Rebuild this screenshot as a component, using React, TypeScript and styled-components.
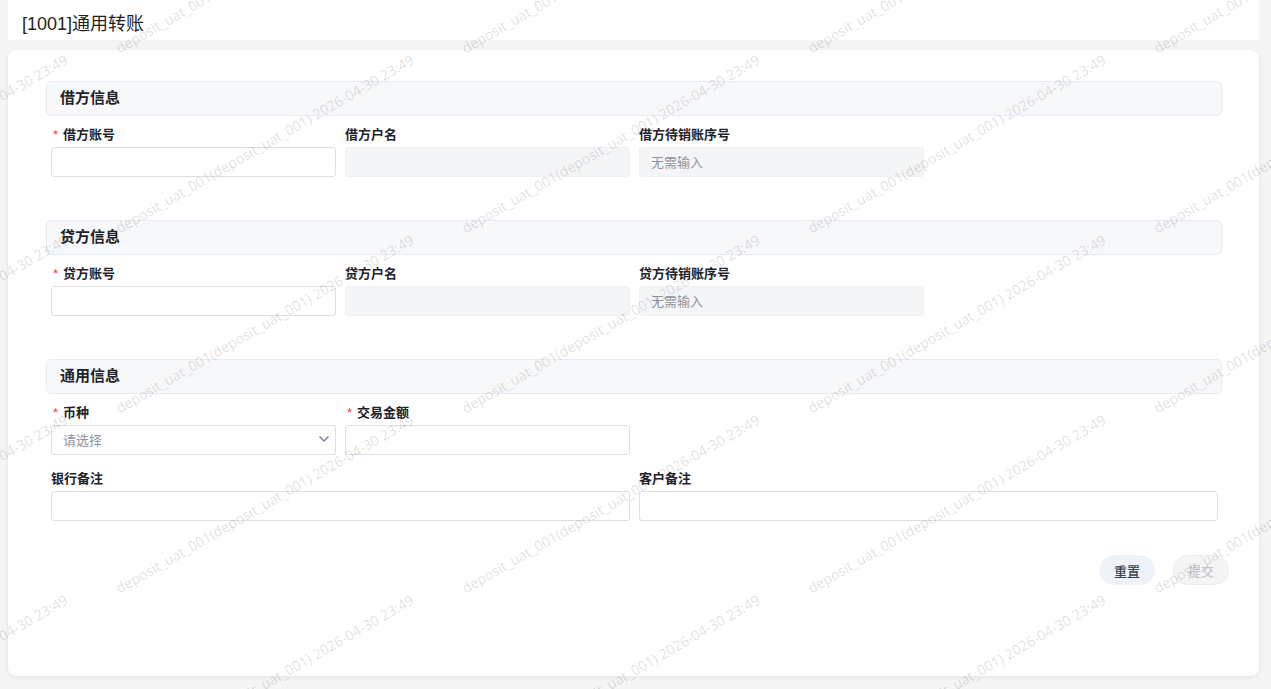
import React from 'react';
import styled, { createGlobalStyle } from 'styled-components';

const GlobalStyle = createGlobalStyle`
  html, body {
    margin: 0;
    padding: 0;
    background: #f5f5f5;
  }
  * {
    box-sizing: border-box;
  }
  body {
    font-family: "Liberation Sans", "Noto Sans CJK SC", sans-serif;
    color: #303133;
  }
`;

interface FieldProps {
  label: string;
  required?: boolean;
  disabled?: boolean;
  placeholder?: string;
  select?: boolean;
  wide?: boolean;
}

const WATERMARK = 'deposit_uat_001(deposit_uat_001) 2026-04-30 23:49';

function Watermark() {
  const marks: { x: number; y: number; key: string }[] = [];
  for (let i = -1; i <= 3; i++) {
    for (let j = -1; j <= 4; j++) {
      const endX = 412 + 346 * i;
      const endY = 62 + 180 * j;
      marks.push({ x: endX - 293, y: endY + 171, key: `${i}-${j}` });
    }
  }
  return (
    <S.Watermark>
      {marks.map((m) => (
        <S.Mark key={m.key} style={{ left: m.x, top: m.y - 11 }}>
          {WATERMARK}
        </S.Mark>
      ))}
    </S.Watermark>
  );
}

function Field({ label, required, disabled, placeholder, select, wide }: FieldProps) {
  return (
    <S.Item wide={wide}>
      <S.Label>
        {required && <S.Star>*</S.Star>}
        {label}
      </S.Label>
      {select ? (
        <S.Select>
          <span>{placeholder}</span>
          <svg width="12" height="8" viewBox="0 0 12 8">
            <polyline points="1.5,1.5 6,6 10.5,1.5" fill="none" stroke="#7b8192" strokeWidth="1.5" />
          </svg>
        </S.Select>
      ) : (
        <S.Input disabled={disabled} placeholder={placeholder} />
      )}
    </S.Item>
  );
}

function Section({ title, children }: { title: string; children: React.ReactNode }) {
  return (
    <S.Section>
      <S.SectionHead>{title}</S.SectionHead>
      <S.Grid>{children}</S.Grid>
    </S.Section>
  );
}

export default function App() {
  return (
    <S.Page>
      <GlobalStyle />
      <S.Header>
        <S.Title>[1001]通用转账</S.Title>
      </S.Header>
      <S.Card>
        <Section title="借方信息">
          <Field label="借方账号" required />
          <Field label="借方户名" disabled />
          <Field label="借方待销账序号" disabled placeholder="无需输入" />
        </Section>
        <Section title="贷方信息">
          <Field label="贷方账号" required />
          <Field label="贷方户名" disabled />
          <Field label="贷方待销账序号" disabled placeholder="无需输入" />
        </Section>
        <Section title="通用信息">
          <Field label="币种" required select placeholder="请选择" />
          <Field label="交易金额" required />
          <S.Break />
          <Field label="银行备注" wide />
          <Field label="客户备注" wide />
        </Section>
        <S.Footer>
          <S.Button>重置</S.Button>
          <S.Button disabled>提交</S.Button>
        </S.Footer>
      </S.Card>
      <Watermark />
    </S.Page>
  );
}

const S: {
  Page: any;
  Header: any;
  Title: any;
  Card: any;
  Section: any;
  SectionHead: any;
  Grid: any;
  Break: any;
  Item: any;
  Label: any;
  Star: any;
  Input: any;
  Select: any;
  Footer: any;
  Button: any;
  Watermark: any;
  Mark: any;
} = {
  Page: styled.div`
    position: relative;
    min-height: 100vh;
    padding: 0 12px 0 8px;
    background: #f5f5f5;
    overflow: hidden;
  `,
  Header: styled.div`
    height: 40px;
    padding: 10px 14px 0;
    background: #fff;
  `,
  Title: styled.h1`
    margin: 0;
    font-size: 18px;
    font-weight: 400;
    line-height: 28px;
    color: #1f1f1f;
  `,
  Card: styled.div`
    margin-top: 10px;
    height: 626px;
    padding: 31px 37px 0 38px;
    background: #fff;
    border-radius: 8px;
    box-shadow: 0 1px 4px rgba(0, 0, 0, 0.08);
  `,
  Section: styled.div`
    margin-bottom: 43px;
  `,
  SectionHead: styled.div`
    height: 35px;
    padding-left: 13px;
    line-height: 32px;
    font-size: 15px;
    font-weight: 700;
    color: #1f2329;
    background: #f7f8fa;
    border: 1px solid #e6ebf3;
    border-radius: 5px;
    margin-bottom: 8px;
  `,
  Grid: styled.div`
    display: grid;
    grid-template-columns: repeat(4, 1fr);
    row-gap: 13px;
  `,
  Break: styled.div`
    grid-column: 4 / 5;
  `,
  Item: styled.div<{ wide?: boolean }>`
    grid-column: ${({ wide }) => (wide ? 'span 2' : 'span 1')};
    padding: 0 4px 0 5px;
  `,
  Label: styled.div`
    height: 20px;
    margin-bottom: 3px;
    line-height: 21px;
    font-size: 13px;
    font-weight: 700;
    color: #1f2329;
    white-space: nowrap;
  `,
  Star: styled.span`
    display: inline-block;
    width: 12px;
    padding-left: 2px;
    color: #f04134;
    font-weight: 400;
  `,
  Input: styled.input`
    display: block;
    width: 100%;
    height: 30px;
    padding: 0 11px;
    font-family: inherit;
    font-size: 13px;
    color: #303133;
    background: #fff;
    border: 1px solid #dcdfe6;
    border-radius: 3px;
    outline: none;

    &::placeholder {
      color: #8f939c;
    }

    &:disabled {
      background: #f4f5f7;
      border-color: #eef0f3;
    }
  `,
  Select: styled.div`
    display: flex;
    align-items: center;
    justify-content: space-between;
    height: 30px;
    padding: 0 5px 2px 11px;
    font-size: 13px;
    color: #8f939c;
    background: #fff;
    border: 1px solid #dcdfe6;
    border-radius: 3px;
  `,
  Footer: styled.div`
    display: flex;
    justify-content: flex-end;
    gap: 18px;
    margin-top: -9px;
    margin-right: -7px;
  `,
  Button: styled.button`
    width: 56px;
    height: 30px;
    padding: 0;
    font-family: inherit;
    font-size: 13px;
    font-weight: 500;
    color: #3a3f4b;
    background: #eef3f9;
    border: 1px solid #eef3f9;
    border-radius: 15px;
    cursor: pointer;

    &:disabled {
      color: #c4c6cc;
      background: #f5f5f5;
      border-color: #ebebeb;
      cursor: not-allowed;
    }
  `,
  Watermark: styled.div`
    position: absolute;
    inset: 0;
    pointer-events: none;
    overflow: hidden;
    z-index: 10;
  `,
  Mark: styled.span`
    position: absolute;
    font-family: "Open Sans", sans-serif;
    font-size: 14.2px;
    line-height: 14px;
    white-space: nowrap;
    color: rgba(0, 0, 0, 0.14);
    transform: rotate(-30deg);
    transform-origin: 0 11px;
  `
};
